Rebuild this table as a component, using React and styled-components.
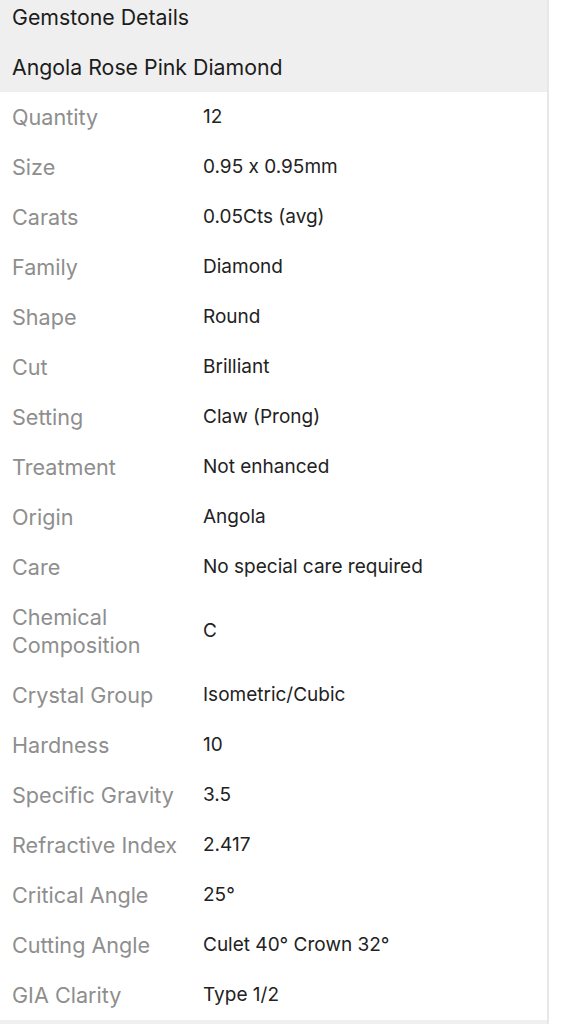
import React from 'react';
import styled, { createGlobalStyle } from 'styled-components';

const GlobalStyle = createGlobalStyle`
    body {
        margin: 0;
        background: #ffffff;
        font-family: "Inter", "Noto Sans", sans-serif;
        font-feature-settings: "calt" 0;
    }
`;

const Panel = styled.div`
    width: 547px;
    border-right: 2px solid #e8e8e8;
    background: #ffffff;
    min-height: 1024px;
`;

const Header = styled.div`
    background: #efefef;
    color: #1c1c1c;
    font-size: 21.3px;
    padding: 0 12px;
`;

const HeaderTitle = styled.div`
    line-height: 34px;
    padding-bottom: 8px;
`;

const HeaderName = styled.div`
    line-height: 50px;
`;

const Row = styled.div`
    display: flex;
    align-items: center;
    padding: 11px 12px;
    min-height: 28px;
`;

const Label = styled.div`
    width: 191px;
    flex-shrink: 0;
    color: #8e8e8e;
    font-size: 21.6px;
    line-height: 28px;
`;

const Value = styled.div`
    color: #222222;
    font-size: 19px;
    line-height: 28px;
`;

const Footer = styled.div`
    background: #f0f0f0;
    height: 4px;
`;

const details = [
    ['Quantity', '12'],
    ['Size', '0.95 x 0.95mm'],
    ['Carats', '0.05Cts (avg)'],
    ['Family', 'Diamond'],
    ['Shape', 'Round'],
    ['Cut', 'Brilliant'],
    ['Setting', 'Claw (Prong)'],
    ['Treatment', 'Not enhanced'],
    ['Origin', 'Angola'],
    ['Care', 'No special care required'],
    ['Chemical Composition', 'C'],
    ['Crystal Group', 'Isometric/Cubic'],
    ['Hardness', '10'],
    ['Specific Gravity', '3.5'],
    ['Refractive Index', '2.417'],
    ['Critical Angle', '25°'],
    ['Cutting Angle', 'Culet 40° Crown 32°'],
    ['GIA Clarity', 'Type 1/2'],
];

const App = () => {
    return (
        <>
            <GlobalStyle />
            <Panel>
                <Header>
                    <HeaderTitle>Gemstone Details</HeaderTitle>
                    <HeaderName>Angola Rose Pink Diamond</HeaderName>
                </Header>
                {details.map(([label, value]) => (
                    <Row key={label}>
                        <Label>{label === 'Chemical Composition' ? <>Chemical<br />Composition</> : label}</Label>
                        <Value>{value}</Value>
                    </Row>
                ))}
                <Footer />
            </Panel>
        </>
    );
};

export default App;
